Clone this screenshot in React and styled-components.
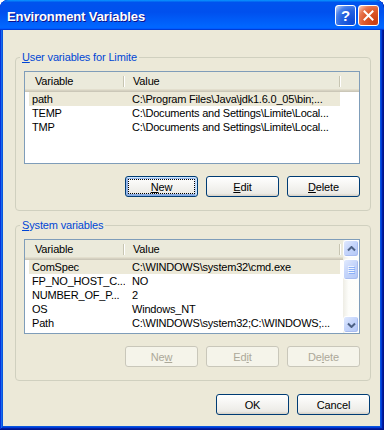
import React from "react";
import styled, { createGlobalStyle, css } from "styled-components";

const Global = createGlobalStyle`
  html, body { margin: 0; padding: 0; background: #fff; }
  body {
    font-family: "Liberation Sans", Tahoma, Arial, sans-serif;
    font-size: 11px;
    letter-spacing: -0.15px;
    color: #000;
  }
  * { box-sizing: border-box; }
`;

const Window = styled.div`
  width: 384px;
  height: 430px;
  display: flex;
  flex-direction: column;
  background: #0855dd;
  border-radius: 8px 8px 0 0;
  overflow: hidden;
  box-shadow: inset -1px -1px #00138c, inset 1px 1px #0831d9,
    inset -2px -2px #001ea0, inset 2px 2px #166aee,
    inset -3px -3px #003bda, inset 3px 3px #0855dd;
`;

const TitleBar = styled.div`
  height: 30px;
  flex: none;
  display: flex;
  align-items: center;
  gap: 2px;
  padding: 0 5px 0 7px;
  border-radius: 8px 8px 0 0;
  background: linear-gradient(
    180deg,
    #0997ff,
    #0053ee 8%,
    #0050ee 40%,
    #06f 88%,
    #06f 93%,
    #005bff 95%,
    #003dd7 96%,
    #003dd7
  );
`;

const Title = styled.span`
  flex: 1;
  margin-top: 2px;
  color: #fff;
  font: bold 13px "Liberation Sans", Arial, sans-serif;
  letter-spacing: -0.1px;
  text-shadow: 1px 1px #0f1089;
  white-space: nowrap;
`;

const CaptionButton = styled.div`
  width: 21px;
  height: 21px;
  flex: none;
  border: 1px solid #fff;
  border-radius: 3px;
  display: flex;
  align-items: center;
  justify-content: center;
  color: #fff;
  font: bold 15px "Liberation Sans", Arial, sans-serif;
  ${(p) =>
    p.$variant === "close"
      ? css`
          background: radial-gradient(
            circle at 85% 85%,
            #c93c10 0%,
            #dd5a2c 50%,
            #e87650 72%,
            #f7b9a0 92%,
            #fff 100%
          );
        `
      : css`
          background: radial-gradient(
            circle at 85% 85%,
            #0b48d6 0%,
            #2563e0 50%,
            #4a80ea 72%,
            #a9c1f2 92%,
            #fff 100%
          );
        `}
`;

const Client = styled.div`
  flex: 1;
  margin: 0 4px 4px 3px;
  background: #ece9d8;
  display: flex;
  flex-direction: column;
  padding: 21px 9px 0 12px;
`;

const Group = styled.fieldset`
  margin: ${(p) => (p.$first ? "0" : "8px")} 0 0 0;
  padding: 7px 10px 13px 8px;
  border: 1px solid #d0d0bf;
  border-radius: 4px;
  min-width: 0;
`;

const Legend = styled.legend`
  padding: 0 2px;
  margin-left: -4px;
  line-height: 13px;
  color: #0046d5;
`;

const GroupBody = styled.div`
  display: flex;
  flex-direction: column;
  gap: 12px;
`;

const List = styled.div`
  height: ${(p) => p.$h}px;
  border: 1px solid #7f9db9;
  background: #fff;
  display: flex;
  overflow: hidden;
`;

const ListMain = styled.div`
  flex: 1;
  min-width: 0;
  display: flex;
  flex-direction: column;
`;

const Header = styled.div`
  height: 20px;
  flex: none;
  display: flex;
  background: #ebeadb;
  box-shadow: inset 0 -1px #cbc7b8, inset 0 -2px #d6d2c2, inset 0 -3px #e2decd;
`;

const HeaderCell = styled.div`
  position: relative;
  width: ${(p) => p.$w}px;
  flex: none;
  display: flex;
  align-items: center;
  padding: 0 0 2px ${(p) => p.$pad}px;
  white-space: nowrap;
  &::after {
    content: "";
    position: absolute;
    right: 1px;
    top: 4px;
    bottom: 5px;
    width: 1px;
    background: #c7c5b2;
    box-shadow: 1px 0 #fff;
  }
`;

const Row = styled.div`
  height: 14px;
  flex: none;
  display: flex;
  width: 311px;
  margin-left: 4px;
  line-height: 14px;
  white-space: nowrap;
  letter-spacing: -0.2px;
  background: ${(p) => (p.$selected ? "#ece9d8" : "transparent")};
`;

const Cell = styled.span`
  width: ${(p) => p.$w}px;
  flex: none;
  overflow: hidden;
  padding-left: ${(p) => p.$pad}px;
`;

const Scrollbar = styled.div`
  width: 16px;
  flex: none;
  display: flex;
  flex-direction: column;
  background: linear-gradient(90deg, #eeede5, #fdfdfa 35%, #fefefb);
`;

const ScrollPart = styled.div`
  height: ${(p) => p.$h}px;
  flex: none;
  margin-top: ${(p) => p.$mt || 0}px;
  border: 1px solid #fff;
  border-radius: 3px;
  display: flex;
  align-items: center;
  justify-content: center;
  background: linear-gradient(135deg, #e1eafe 0%, #c5d5fb 45%, #b4c8f6 100%);
  box-shadow: inset -1px -1px #a9bdf0;
`;

const ScrollSpace = styled.div`
  flex: 1;
`;

const ButtonRow = styled.div`
  display: flex;
  justify-content: flex-end;
  gap: 8px;
  padding-right: ${(p) => p.$pr || 0}px;
  margin-top: ${(p) => p.$mt || 0}px;
`;

const Button = styled.button`
  width: 73px;
  height: 21px;
  padding: 0;
  font: 11px "Liberation Sans", Tahoma, Arial, sans-serif;
  letter-spacing: -0.15px;
  color: #000;
  border: 1px solid #003c74;
  border-radius: 3px;
  background: linear-gradient(180deg, #fff, #ecebe6 86%, #d6d0c5);
  ${(p) =>
    p.$default &&
    css`
      box-shadow: inset -1px 1px #cee7ff, inset 1px 2px #98b8ea,
        inset -2px 2px #bcd4f6, inset 1px -1px #89ade4,
        inset 2px -2px #89ade4;
      outline: 1px dotted #000;
      outline-offset: -4px;
    `}
  &:disabled {
    background: #f5f4ea;
    border-color: #c9c7ba;
    color: #aca899;
  }
`;

const Chevron = ({ down }) => (
  <svg width="9" height="6" viewBox="0 0 9 6">
    <path
      d={down ? "M1 1.5 L4.5 5 L8 1.5" : "M1 4.5 L4.5 1 L8 4.5"}
      fill="none"
      stroke="#4d6185"
      strokeWidth="2"
    />
  </svg>
);

const Grip = () => (
  <svg width="7" height="8" viewBox="0 0 7 8">
    {[0, 2, 4, 6].map((y) => (
      <g key={y}>
        <rect x="0" y={y} width="6" height="1" fill="#eef4fe" />
        <rect x="1" y={y + 1} width="6" height="1" fill="#8cb0f8" />
      </g>
    ))}
  </svg>
);

const CloseGlyph = () => (
  <svg width="11" height="11" viewBox="0 0 11 11">
    <path d="M1.5 1.5 L9.5 9.5 M9.5 1.5 L1.5 9.5" stroke="#fff" strokeWidth="2" strokeLinecap="square" />
  </svg>
);

const userVars = [
  ["path", "C:\\Program Files\\Java\\jdk1.6.0_05\\bin;..."],
  ["TEMP", "C:\\Documents and Settings\\Limite\\Local..."],
  ["TMP", "C:\\Documents and Settings\\Limite\\Local..."],
];

const sysVars = [
  ["ComSpec", "C:\\WINDOWS\\system32\\cmd.exe"],
  ["FP_NO_HOST_C...", "NO"],
  ["NUMBER_OF_P...", "2"],
  ["OS", "Windows_NT"],
  ["Path", "C:\\WINDOWS\\system32;C:\\WINDOWS;..."],
];

function VarList({ rows, height, scroll }) {
  return (
    <List $h={height}>
      <ListMain>
        <Header>
          <HeaderCell $w={100} $pad={10}>Variable</HeaderCell>
          <HeaderCell $w={216} $pad={8}>Value</HeaderCell>
        </Header>
        {rows.map(([name, value], i) => (
          <Row key={name} $selected={i === 0}>
            <Cell $w={96} $pad={3}>{name}</Cell>
            <Cell $w={215} $pad={7}>{value}</Cell>
          </Row>
        ))}
      </ListMain>
      {scroll && (
        <Scrollbar>
          <ScrollPart $h={17}>
            <Chevron />
          </ScrollPart>
          <ScrollPart $h={21} $mt={2}>
            <Grip />
          </ScrollPart>
          <ScrollSpace />
          <ScrollPart $h={17}>
            <Chevron down />
          </ScrollPart>
        </Scrollbar>
      )}
    </List>
  );
}

export default function App() {
  return (
    <>
      <Global />
      <Window>
        <TitleBar>
          <Title>Environment Variables</Title>
          <CaptionButton $variant="help">?</CaptionButton>
          <CaptionButton $variant="close">
            <CloseGlyph />
          </CaptionButton>
        </TitleBar>
        <Client>
          <Group $first>
            <Legend>
              <u>U</u>ser variables for Limite
            </Legend>
            <GroupBody>
              <VarList rows={userVars} height={93} />
              <ButtonRow>
                <Button $default>
                  <u>N</u>ew
                </Button>
                <Button>
                  <u>E</u>dit
                </Button>
                <Button>
                  <u>D</u>elete
                </Button>
              </ButtonRow>
            </GroupBody>
          </Group>
          <Group>
            <Legend>
              <u>S</u>ystem variables
            </Legend>
            <GroupBody>
              <VarList rows={sysVars} height={95} scroll />
              <ButtonRow>
                <Button disabled>
                  Ne<u>w</u>
                </Button>
                <Button disabled>
                  Ed<u>i</u>t
                </Button>
                <Button disabled>
                  De<u>l</u>ete
                </Button>
              </ButtonRow>
            </GroupBody>
          </Group>
          <ButtonRow $mt={13} $pr={1}>
            <Button>OK</Button>
            <Button>Cancel</Button>
          </ButtonRow>
        </Client>
      </Window>
    </>
  );
}
